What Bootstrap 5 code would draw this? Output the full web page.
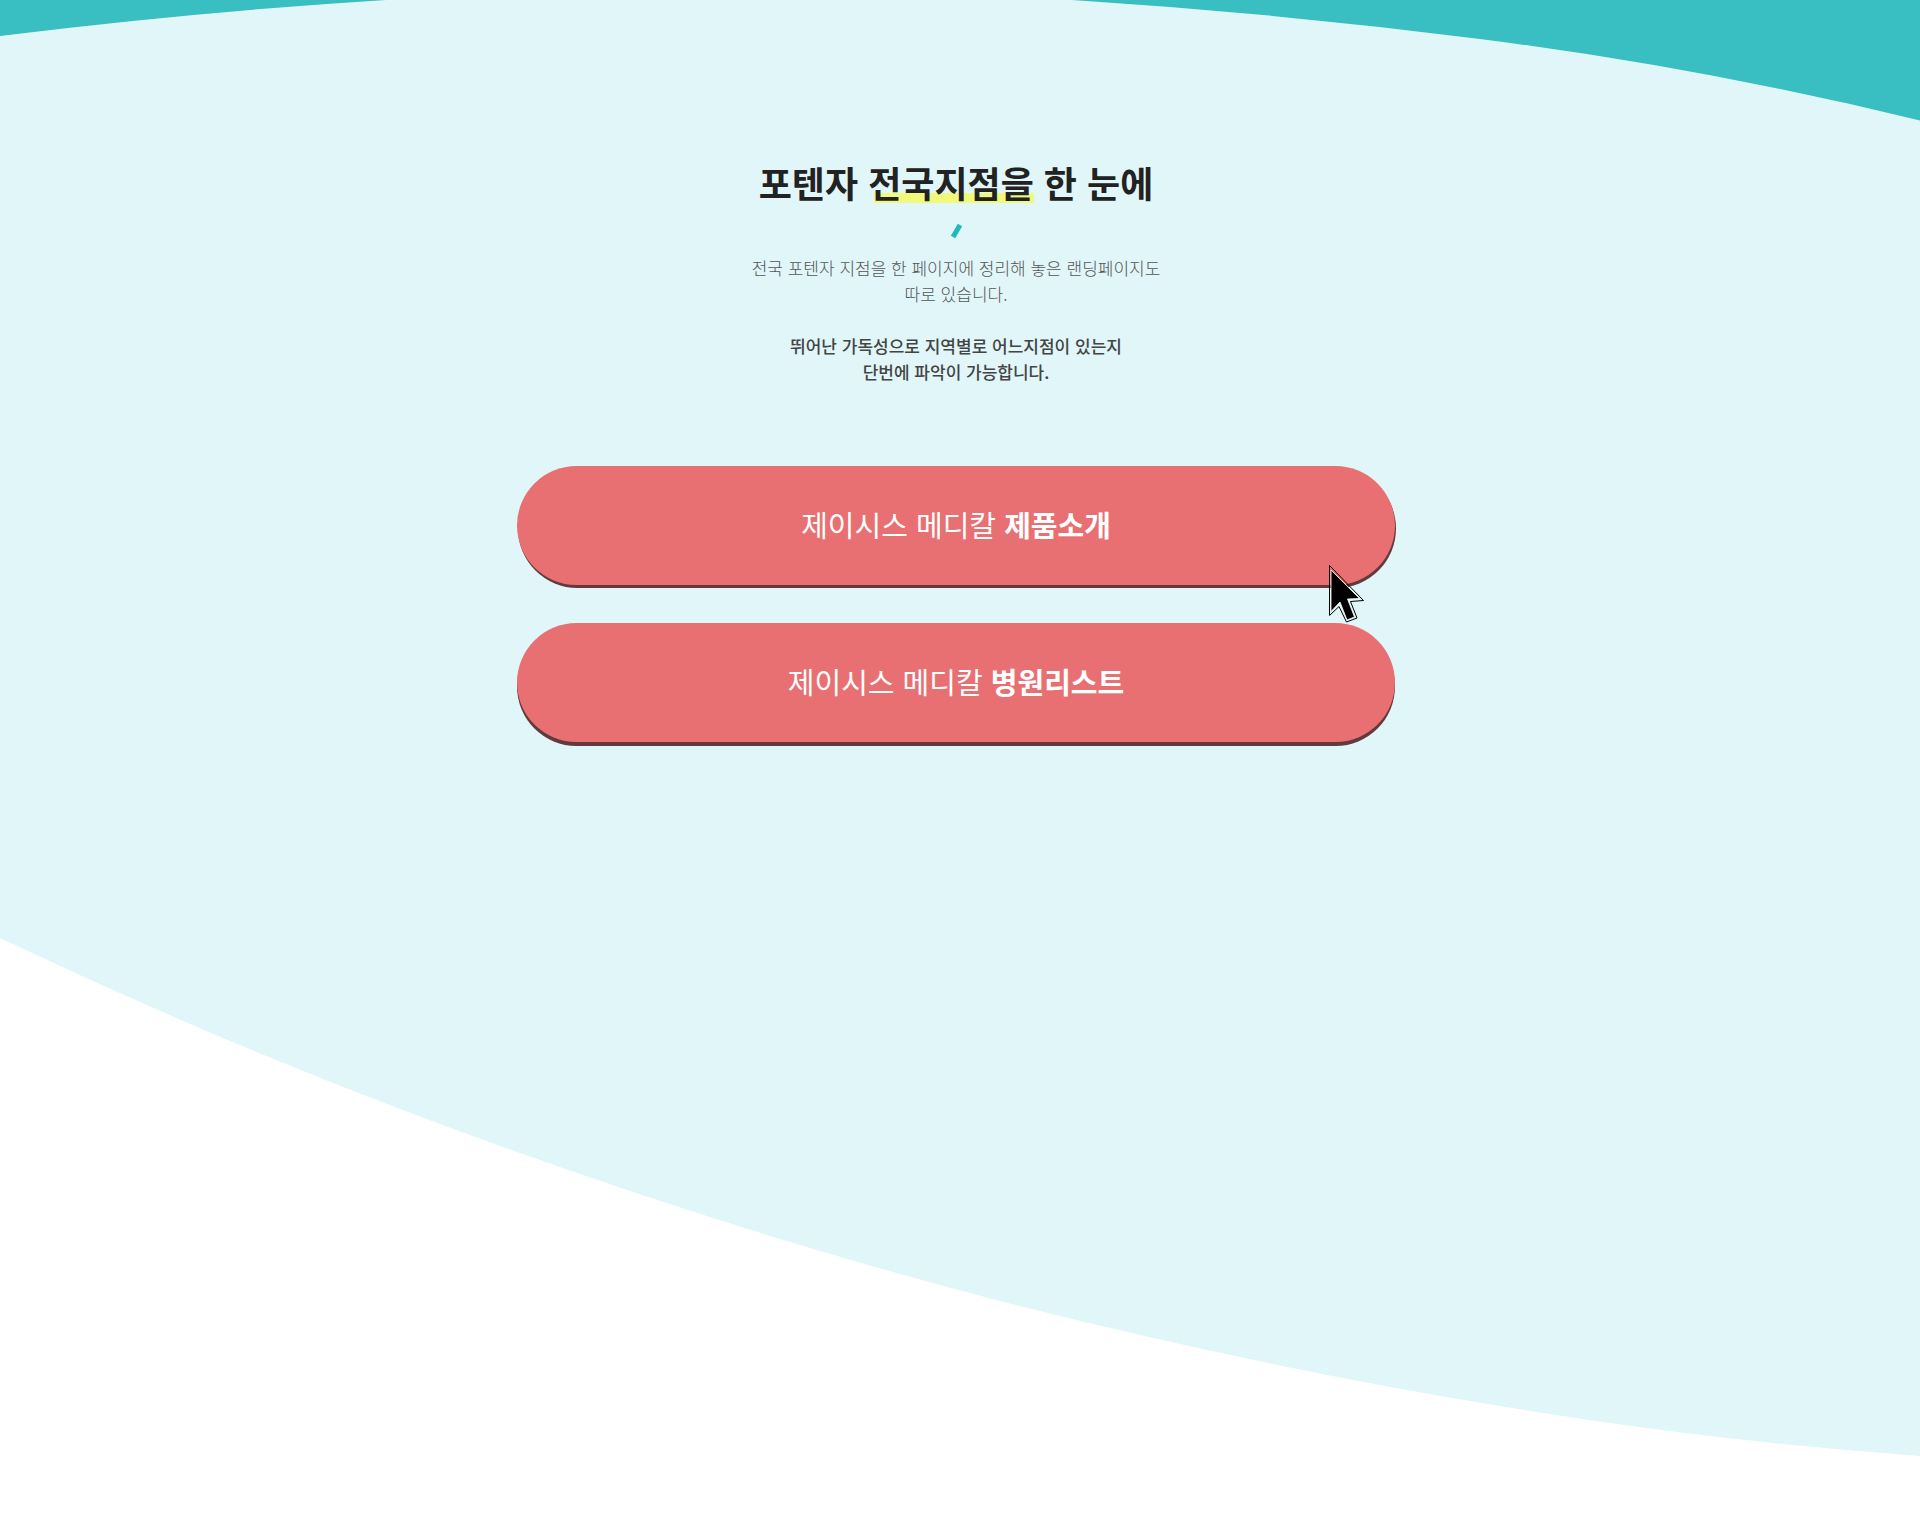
<!DOCTYPE html>
<html lang="ko">
<head>
<meta charset="utf-8">
<meta name="viewport" content="width=device-width, initial-scale=1">
<title>포텐자 전국지점을 한 눈에</title>
<link href="https://cdn.jsdelivr.net/npm/bootstrap@5.3.0/dist/css/bootstrap.min.css" rel="stylesheet">
<style>
  body { font-family: "Noto Sans CJK KR", sans-serif; background: #fff; color: #444; }
  .branches { min-height: 100vh; padding: 154px 24px 154px 16px; }
  .wave { z-index: 0; }
  .content-wrap { z-index: 1; max-width: 878px; }
  .headline { font-size: 36px; line-height: 56px; font-weight: 700; color: #222; }
  .highlight { background: linear-gradient(#f1f97b, #f1f97b) right 0 bottom 5px / calc(100% - 6px) 10px no-repeat; }
  .slash { width: 5px; height: 14px; margin: 14px 0 17px; background: #23b8bb; transform: rotate(30deg); }
  .copy { font-size: 17px; line-height: 26px; }
  .copy-light { font-weight: 300; color: #555; }
  .copy-strong { margin-top: 26px; font-weight: 500; color: #444; }
  .links { gap: 38px; margin-top: 81px; }
  .pill { min-height: 119px; padding-bottom: 4px; font-size: 29px; line-height: 44px; font-weight: 400; color: #fff; background: #e97072; box-shadow: 0 4px 0 #633a3c; }
  .pill:hover { color: #fff; }
  .pill-active { box-shadow: 1px 3px 0 #633a3c; }
  .pointer { right: 30px; bottom: -38px; z-index: 2; pointer-events: none; }
</style>
</head>
<body>
<main class="branches position-relative overflow-hidden">
  <svg class="wave position-absolute top-0 start-0 w-100 h-100" viewBox="0 0 1920 1536" preserveAspectRatio="none" aria-hidden="true">
    <rect width="1920" height="200" fill="#39bfc2"/>
    <path fill="#e0f6f8" d="M0 36Q193 12 386 0Q729-21 1072 0Q1276 13 1480 39Q1700 67 1920 120.500V1456Q1710 1441 1500 1406Q1250 1365 1000 1301Q900 1275 800 1245Q600 1185 400 1109Q200 1033 0 938Z"/>
  </svg>
  <div class="content-wrap position-relative mx-auto text-center">
    <header class="d-flex flex-column align-items-center">
      <h1 class="headline mb-0">포텐자 <span class="highlight">전국지점을</span> 한 눈에</h1>
      <span class="slash" aria-hidden="true"></span>
      <p class="copy copy-light mb-0">전국 포텐자 지점을 한 페이지에 정리해 놓은 랜딩페이지도<br>따로 있습니다.</p>
      <p class="copy copy-strong mb-0">뛰어난 가독성으로 지역별로 어느지점이 있는지<br>단번에 파악이 가능합니다.</p>
    </header>
    <nav class="links d-flex flex-column" aria-label="바로가기">
      <div class="position-relative">
        <a class="pill pill-active d-flex align-items-center justify-content-center rounded-pill text-decoration-none" href="#products"><span>제이시스 메디칼 <strong>제품소개</strong></span></a>
        <svg class="pointer position-absolute" width="37" height="60" viewBox="0 0 37 60" aria-hidden="true">
          <path d="M1.500 2.500V52.500L11 43.500L18.500 59L29 55L22.500 38.500L35.500 37.500Z" fill="none" stroke="#000" stroke-width="1"/>
          <path d="M3 7V48.500L12 39L19 57L26.500 54L19.500 36L31.500 35.500Z" fill="#000" stroke="#fff" stroke-opacity=".8" stroke-width="1"/>
        </svg>
      </div>
      <a class="pill d-flex align-items-center justify-content-center rounded-pill text-decoration-none" href="#hospitals"><span>제이시스 메디칼 <strong>병원리스트</strong></span></a>
    </nav>
  </div>
</main>
<script src="https://cdn.jsdelivr.net/npm/bootstrap@5.3.0/dist/js/bootstrap.bundle.min.js"></script>
</body>
</html>
